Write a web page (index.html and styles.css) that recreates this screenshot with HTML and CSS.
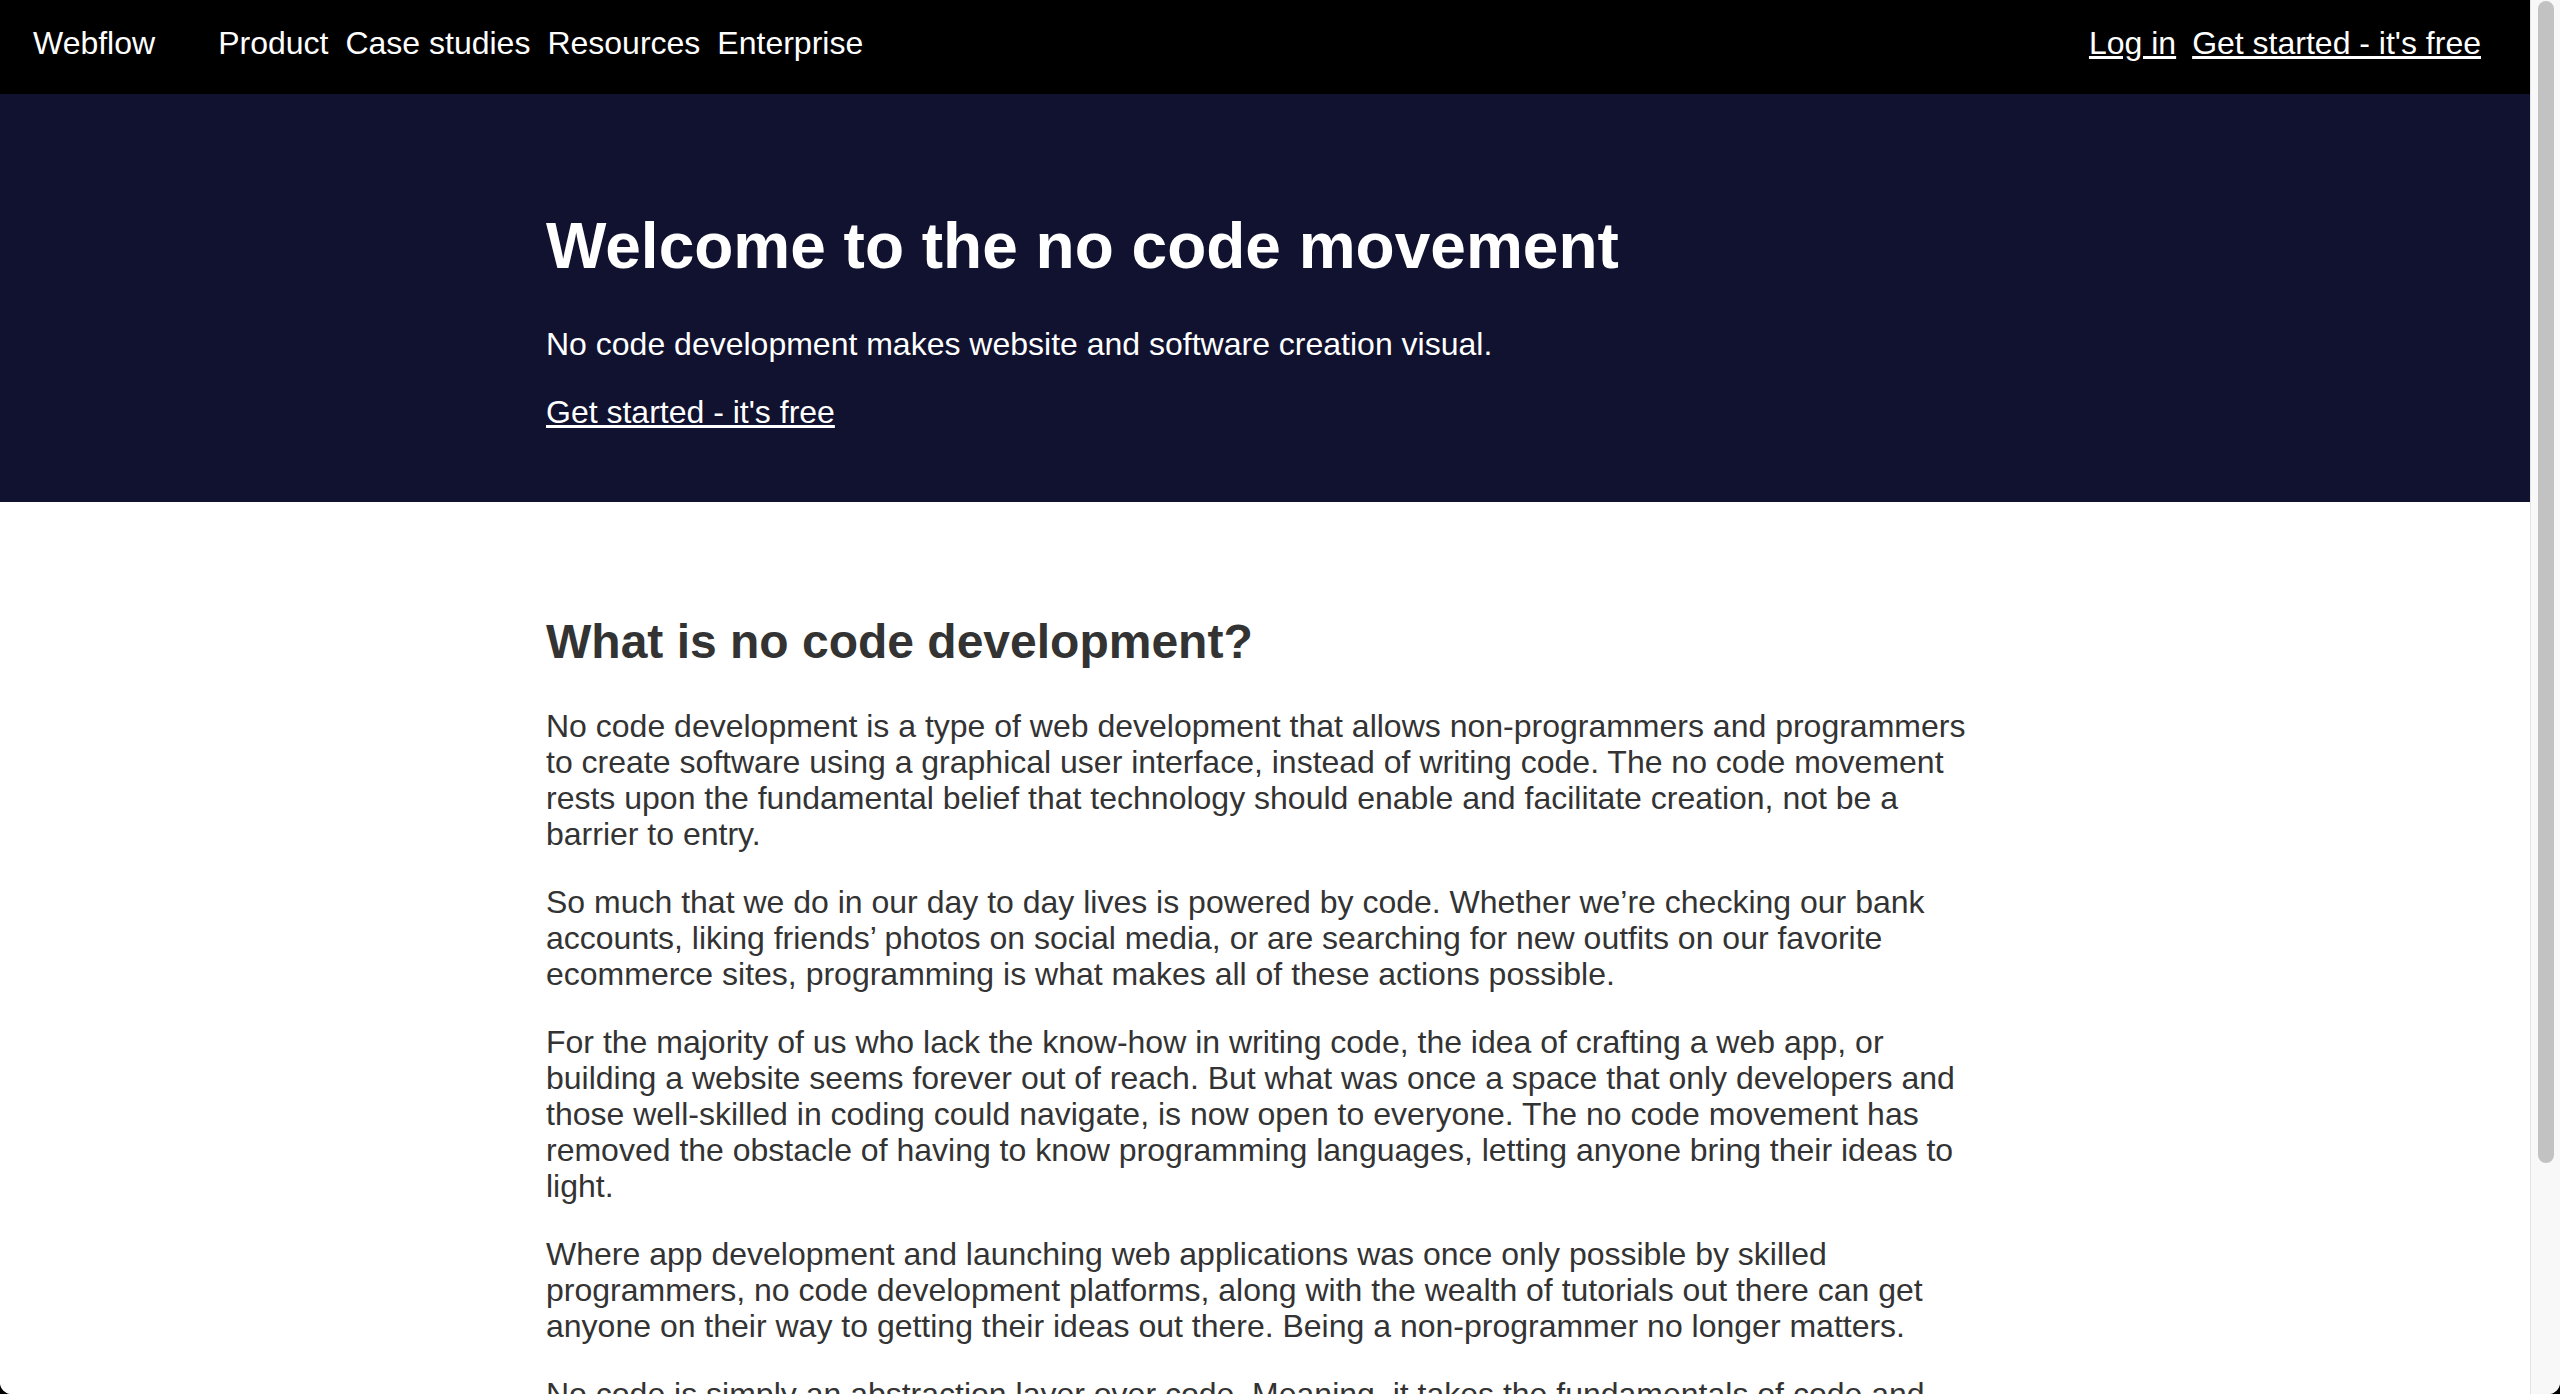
FILE: index.html
```html
<!DOCTYPE html>
<html lang="en">
<head>
<meta charset="utf-8">
<title>Welcome to the no code movement</title>
<link rel="stylesheet" href="styles.css">
</head>
<body>
<div class="window">
  <div class="page">
    <header class="nav">
      <a class="brand" href="#">Webflow</a>
      <nav class="menu">
        <a href="#">Product</a>
        <a href="#">Case studies</a>
        <a href="#">Resources</a>
        <a href="#">Enterprise</a>
      </nav>
      <div class="actions">
        <a class="underlined" href="#">Log in</a>
        <a class="underlined" href="#">Get started - it's free</a>
      </div>
    </header>

    <section class="hero">
      <div class="container">
        <h1>Welcome to the no code movement</h1>
        <p class="lead">No code development makes website and software creation visual.</p>
        <p class="cta"><a class="underlined" href="#">Get started - it's free</a></p>
      </div>
    </section>

    <main class="content">
      <div class="container">
        <h2>What is no code development?</h2>
        <p>No code development is a type of web development that allows non-programmers and programmers to create software using a graphical user interface, instead of writing code. The no code movement rests upon the fundamental belief that technology should enable and facilitate creation, not be a barrier to entry.</p>
        <p>So much that we do in our day to day lives is powered by code. Whether we’re checking our bank accounts, liking friends’ photos on social media, or are searching for new outfits on our favorite ecommerce sites, programming is what makes all of these actions possible.</p>
        <p>For the majority of us who lack the know-how in writing code, the idea of crafting a web app, or building a website seems forever out of reach. But what was once a space that only developers and those well-skilled in coding could navigate, is now open to everyone. The no code movement has removed the obstacle of having to know programming languages, letting anyone bring their ideas to light.</p>
        <p>Where app development and launching web applications was once only possible by skilled programmers, no code development platforms, along with the wealth of tutorials out there can get anyone on their way to getting their ideas out there. Being a non-programmer no longer matters.</p>
        <p>No code is simply an abstraction layer over code. Meaning, it takes the fundamentals of code and translates them into a visual interface that anyone can understand and use.</p>
      </div>
    </main>
  </div>
  <div class="scrollbar"><div class="thumb"></div></div>
</div>
</body>
</html>
```

FILE: styles.css
```css
html, body {
  margin: 0;
  padding: 0;
  height: 100%;
  background: #000;
}

body {
  font-family: "Liberation Sans", Arial, Helvetica, sans-serif;
  overflow: hidden;
}

.window {
  display: flex;
  height: 100vh;
  background: #fff;
  border-radius: 0 0 12px 12px;
  overflow: hidden;
}

.page {
  flex: 1;
  min-width: 0;
  overflow: hidden;
  background: #fff;
}

/* Navigation */
.nav {
  display: flex;
  align-items: flex-start;
  height: 94px;
  box-sizing: border-box;
  padding: 25px 33px 0;
  background: #000;
  font-size: 32px;
  line-height: 36px;
}

.nav a {
  color: #fff;
  text-decoration: none;
}

.brand {
  margin-right: 63px;
}

.menu {
  display: flex;
  gap: 17px;
}

.actions {
  display: flex;
  gap: 16px;
  margin-left: auto;
  padding-right: 16px;
}

.nav a.underlined,
a.underlined {
  text-decoration: underline;
}

/* Hero */
.hero {
  background: #111230;
  color: #fff;
  padding: 116px 0 72px;
}

.container {
  width: 1438px;
  margin: 0 auto;
}

.hero h1 {
  margin: 0 0 43.5px;
  font-size: 64px;
  line-height: 72px;
  font-weight: 700;
}

.hero p {
  margin: 0 0 32px;
  font-size: 32px;
  line-height: 36px;
}

.hero p.cta {
  margin: 0;
}

.hero a {
  color: #fff;
}

/* Content */
.content {
  padding: 113px 0 80px;
  color: #333;
}

.content h2 {
  margin: 0 0 39px;
  font-size: 48px;
  line-height: 54px;
  font-weight: 700;
}

.content p {
  margin: 0 0 32px;
  font-size: 32px;
  line-height: 36px;
}

/* Scrollbar */
.scrollbar {
  width: 30px;
  flex: none;
  box-sizing: border-box;
  background: #f8f8f8;
  border-left: 1px solid #e4e4e4;
  padding: 1px 6px 0 7px;
}

.thumb {
  height: 1162px;
  border-radius: 8px;
  background: #c2c2c2;
}
```
